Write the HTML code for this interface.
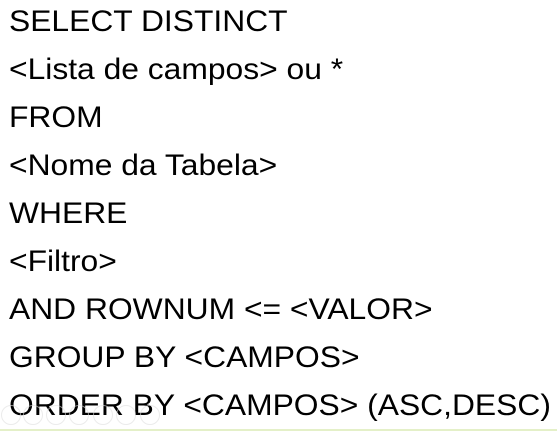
<!DOCTYPE html>
<html><head><style>
html,body{margin:0;padding:0;background:#fff;width:557px;height:431px;overflow:hidden}
.t{position:absolute;left:9px;top:-2px;font-family:"Liberation Sans",sans-serif;font-size:30px;color:#000;line-height:48px;white-space:nowrap;transform:scaleX(1.06);transform-origin:0 0}
.t div{height:48px}
.bar{position:absolute;left:0;bottom:0;width:557px;height:2px;background:#e4f0c8}
.ic{position:absolute;top:405px;width:18px;height:18px;border:1px solid #ddd;border-radius:50%;opacity:.6}
</style></head><body>
<div class="t">
<div>SELECT DISTINCT</div>
<div>&lt;Lista de campos&gt; ou *</div>
<div>FROM</div>
<div>&lt;Nome da Tabela&gt;</div>
<div>WHERE</div>
<div>&lt;Filtro&gt;</div>
<div>AND ROWNUM &lt;= &lt;VALOR&gt;</div>
<div>GROUP BY &lt;CAMPOS&gt;</div>
<div>ORDER BY &lt;CAMPOS&gt; (ASC,DESC)</div>
</div>
<div class="ic" style="left:1px"></div>
<div class="ic" style="left:23px"></div>
<div class="ic" style="left:46px"></div>
<div class="ic" style="left:69px"></div>
<div class="ic" style="left:93px"></div>
<div class="ic" style="left:116px"></div>
<div class="ic" style="left:140px"></div>
<div class="bar"></div>
</body></html>
